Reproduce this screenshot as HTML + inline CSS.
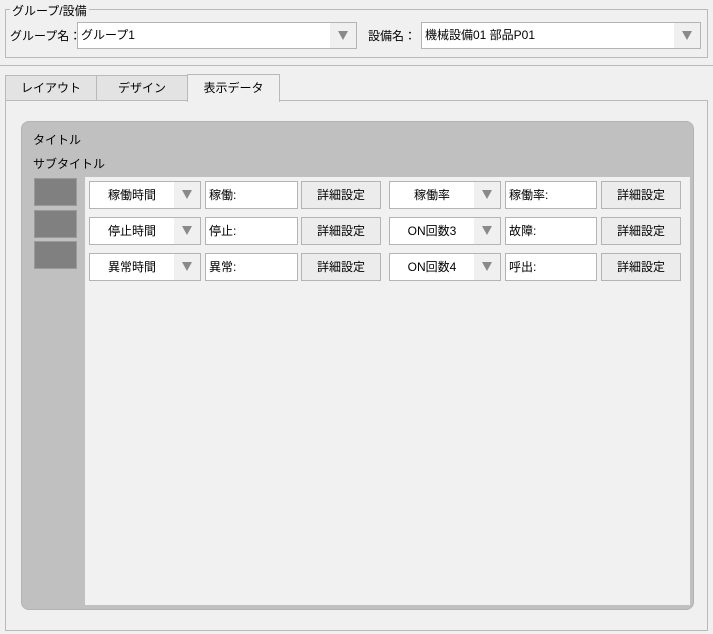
<!DOCTYPE html>
<html><head><meta charset="utf-8"><style>
*{box-sizing:border-box;margin:0;padding:0}
body{width:713px;height:634px;background:#f0f0f0;font-family:"Liberation Sans","Noto Sans CJK JP",sans-serif;font-size:12px;color:#000;position:relative;overflow:hidden}
.a{position:absolute}
.box{position:absolute;border:1px solid #b9b9b9}
.combo{position:absolute;background:#fff;border:1px solid #b4b4b4;height:28px;line-height:26px}
.combo .arr{position:absolute;right:0;top:0;bottom:0;width:26px;background:#f0f0f0}
.combo .arr:after{content:"";position:absolute;left:8px;top:8px;border-left:5px solid transparent;border-right:5px solid transparent;border-top:9px solid #8a8a8a}
.txt{position:absolute;background:#fff;border:1px solid #b4b4b4;height:28px;line-height:26px;padding-left:3px}
.btn{position:absolute;background:#ececec;border:1px solid #b4b4b4;height:28px;line-height:26px;text-align:center}
.sq{position:absolute;left:34px;width:43px;height:28px;background:#808080;border:1px solid #9a9a9a}
</style></head><body>
<div class="box" style="left:5px;top:9px;width:703px;height:49px"></div>
<div class="a" style="left:10px;top:2px;background:#f0f0f0;padding:0 2px">グループ/設備</div>
<div class="a" style="left:10px;top:27px">グループ名：</div>
<div class="combo" style="left:77px;top:22px;width:280px;height:27px;padding-left:3px;line-height:25px">グループ1<div class="arr"></div></div>
<div class="a" style="left:368px;top:27px">設備名：</div>
<div class="combo" style="left:421px;top:22px;width:280px;height:27px;padding-left:3px;line-height:25px">機械設備01 部品P01<div class="arr"></div></div>
<div class="a" style="left:0;top:65px;width:713px;height:1px;background:#b9b9b9"></div>

<div class="box" style="left:5px;top:100px;width:703px;height:531px"></div>
<div class="a" style="left:5px;top:75px;width:92px;height:26px;background:#e3e3e3;border:1px solid #b9b9b9;text-align:center;line-height:24px">レイアウト</div>
<div class="a" style="left:96px;top:75px;width:92px;height:26px;background:#e3e3e3;border:1px solid #b9b9b9;text-align:center;line-height:24px">デザイン</div>
<div class="a" style="left:187px;top:74px;width:93px;height:28px;background:#f0f0f0;border:1px solid #b9b9b9;border-bottom:none;text-align:center;line-height:26px">表示データ</div>

<div class="a" style="left:21px;top:121px;width:673px;height:489px;background:#c0c0c0;border-radius:8px;border:1px solid #b2b2b2"></div>
<div class="a" style="left:33px;top:131px">タイトル</div>
<div class="a" style="left:33px;top:155px">サブタイトル</div>
<div class="a" style="left:85px;top:177px;width:605px;height:428px;background:#f1f1f1"></div>
<div class="sq" style="top:178px"></div>
<div class="sq" style="top:210px"></div>
<div class="sq" style="top:241px"></div>

<div class="combo" style="left:89px;top:181px;width:112px;padding-right:26px;text-align:center">稼働時間<div class="arr"></div></div>
<div class="txt" style="left:205px;top:181px;width:93px">稼働:</div>
<div class="btn" style="left:301px;top:181px;width:80px">詳細設定</div>
<div class="combo" style="left:389px;top:181px;width:112px;padding-right:26px;text-align:center">稼働率<div class="arr"></div></div>
<div class="txt" style="left:505px;top:181px;width:92px">稼働率:</div>
<div class="btn" style="left:601px;top:181px;width:80px">詳細設定</div>

<div class="combo" style="left:89px;top:217px;width:112px;padding-right:26px;text-align:center">停止時間<div class="arr"></div></div>
<div class="txt" style="left:205px;top:217px;width:93px">停止:</div>
<div class="btn" style="left:301px;top:217px;width:80px">詳細設定</div>
<div class="combo" style="left:389px;top:217px;width:112px;padding-right:26px;text-align:center">ON回数3<div class="arr"></div></div>
<div class="txt" style="left:505px;top:217px;width:92px">故障:</div>
<div class="btn" style="left:601px;top:217px;width:80px">詳細設定</div>

<div class="combo" style="left:89px;top:253px;width:112px;padding-right:26px;text-align:center">異常時間<div class="arr"></div></div>
<div class="txt" style="left:205px;top:253px;width:93px">異常:</div>
<div class="btn" style="left:301px;top:253px;width:80px">詳細設定</div>
<div class="combo" style="left:389px;top:253px;width:112px;padding-right:26px;text-align:center">ON回数4<div class="arr"></div></div>
<div class="txt" style="left:505px;top:253px;width:92px">呼出:</div>
<div class="btn" style="left:601px;top:253px;width:80px">詳細設定</div>
</body></html>
